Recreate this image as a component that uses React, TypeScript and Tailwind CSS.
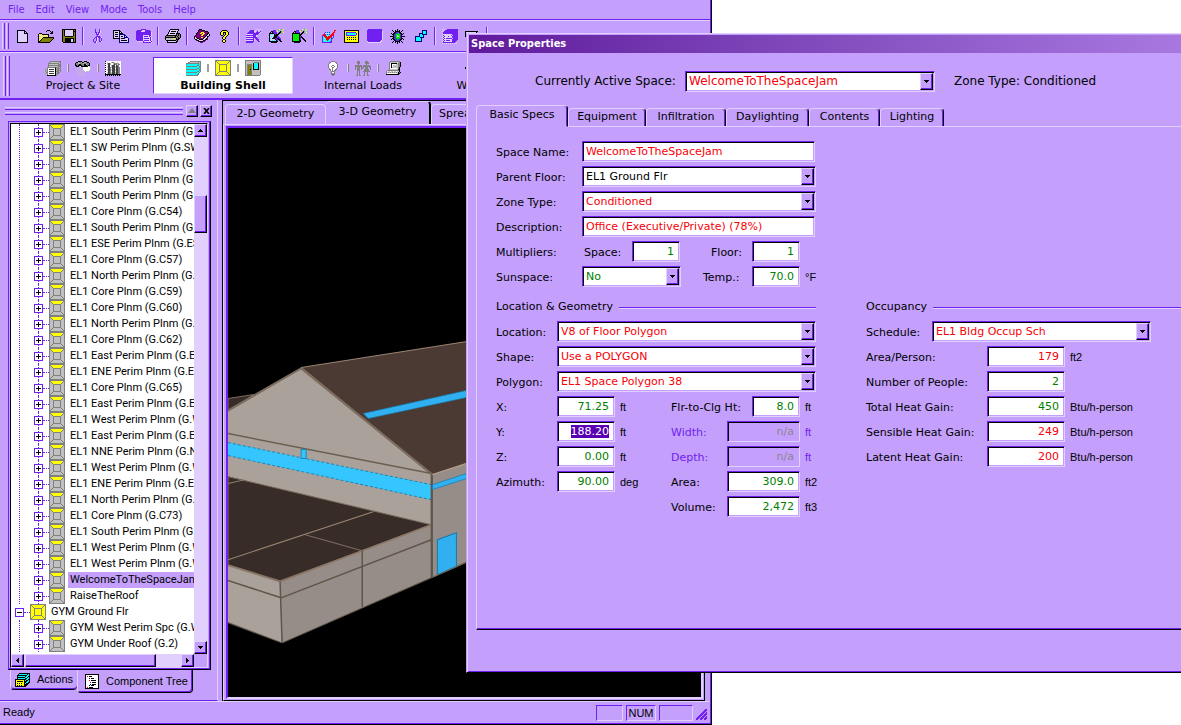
import { useEffect, useId, useRef } from "react";
import type { ReactNode } from "react";

/* ---------- pixel icons ---------- */

const PALETTE: Record<string, string> = {
  k: "#000000",
  w: "#ffffff",
  p: "#7020f0",
  l: "#e1d0fe",
  y: "#ffff00",
  o: "#808000",
  g: "#808080",
  s: "#c0c0c0",
  c: "#00ffff",
  r: "#ff0000",
  G: "#00f000",
  m: "#800080",
  b: "#000080",
  d: "#404040",
  t: "#008080",
};

function Pixels({ rows, label }: { rows: string[]; label?: string }) {
  const width = Math.max(...rows.map((r) => r.length));
  const rects: ReactNode[] = [];
  rows.forEach((row, y) => {
    let x = 0;
    while (x < row.length) {
      const ch = row[x];
      let end = x + 1;
      while (end < row.length && row[end] === ch) end++;
      if (PALETTE[ch]) {
        rects.push(<rect key={`${x}-${y}`} x={x} y={y} width={end - x} height={1} fill={PALETTE[ch]} />);
      }
      x = end;
    }
  });
  return (
    <svg width={width} height={rows.length} viewBox={`0 0 ${width} ${rows.length}`} shapeRendering="crispEdges" role={label ? "img" : undefined} aria-label={label} aria-hidden={label ? undefined : true}>
      {rects}
    </svg>
  );
}

const ICONS: Record<string, string[]> = {
  newFile: [
    "kkkkkkkk...",
    "kllllllkk..",
    "kllllllklk.",
    "kllllllkkkk",
    "klllllllllk",
    "klllllllllk",
    "klllllllllk",
    "klllllllllk",
    "klllllllllk",
    "klllllllllk",
    "klllllllllk",
    "klllllllllk",
    "kkkkkkkkkkk",
  ],
  open: [
    ".........kkk....",
    "........k...k.k.",
    ".............kk.",
    ".kkk........kkk.",
    "kylykkkkkkk.....",
    "klylylylylk.....",
    "kylylylylyk.....",
    "klylykkkkkkkkkkk",
    "kylykooooooooook",
    "klykooooooooook.",
    "kykooooooooook..",
    "kkooooooooook...",
    "kkkkkkkkkkkk....",
  ],
  save: [
    "kkkkkkkkkkkkkk",
    "kokllllllllkok",
    "kokllllllllkkk",
    "kokllllllllkok",
    "kokllllllllkok",
    "kokllllllllkok",
    "kokllllllllkok",
    "kookkkkkkkkook",
    "kooooooooooook",
    "kookkkkkkkkkok",
    "kookkkkkkllkok",
    "kookkkkkkllkok",
    "kookkkkkkllkok",
    ".kkkkkkkkkkkkk",
  ],
  cut: [
    "..p...p..",
    "..p...pl.",
    "..p...pl.",
    "..pp.ppl.",
    "...p.pl..",
    "...pppl..",
    "....pl...",
    "...pppp..",
    "..pplpppl",
    ".p.pl.p.p",
    "p..pl.p.p",
    "p..pl.p.p",
    "p.pl..ppl",
    ".ppl.....",
  ],
  copy: [
    "kkkkkkk.........",
    "klllllkk........",
    "klkkklklk.......",
    "klllllkkkk......",
    "klkkklbbbbbb....",
    "klllllbllllbb...",
    "klkkklblkklblb..",
    "klllllbllllbbbb.",
    "kkkkkkblkkkklllb",
    "......bllllllllb",
    "......blkkkkkklb",
    "......bllllllllb",
    "......bbbbbbbbbb",
  ],
  paste: [
    ".....ppppp......",
    ".ppppplllppppp..",
    "pppppllllpppppp.",
    "pppppppppppppppl",
    "pppppppppppppppl",
    "pppppppppppppppl",
    "pppppppllllllppl",
    "ppppppplpppplpl.",
    "ppppppplllllllpl",
    "ppppppplppppplpl",
    "ppppppplllllllpl",
    ".pppppplppppplpl",
    "..lllllplllllllp",
    ".......ppppppppl",
  ],
  print: [
    ".....kkkkkkkkk..",
    "....kllllllllk..",
    "....klkkkkklk...",
    "...kllllllllk...",
    "...klkkkkklkkkk.",
    "..kllllllllkgkgk",
    ".kkkkkkkkkkkgkgk",
    "kgggggggggkgkggk",
    "kkkkkkkkkkkggkgk",
    "ksssssssyyskgkk.",
    "ksssssssssskkk..",
    ".kkkkkkkkkkgk...",
    "..kllllllllkk...",
    "..kkkkkkkkkk....",
  ],
  book: [
    ".....kkk........",
    "....kmmmkkk.....",
    "....kmmmmmmkkk..",
    "...kmmmyyymmmmk.",
    "..kmmmyymyymmkk.",
    "..kmmmmmyymmmklk",
    ".kmmmmmyymmmkllk",
    "kmmmmmmmmmmklkk.",
    "klkmmmmyymkllk..",
    "kllkkmmmmkllkm..",
    ".kkllkkkkllkkm..",
    "..mkkllllkkm....",
    "....mkkkkmm.....",
    "......mmm.......",
  ],
  help: [
    "..kkkkk..",
    ".kyyyyyk.",
    "kyykkkyyk",
    "kyyk.kyyk",
    "kyyk.kyyk",
    ".kk.kyyk.",
    "...kyyk..",
    "..kyyk...",
    "..kyyk...",
    "...kk....",
    "..kyyk...",
    "..kyyk...",
    "...kk....",
  ],
  wizardMuted: [
    "..........l.l.l.",
    "....pppp.l...l..",
    "...pppppll.pl.p.",
    "..pppppp..ppppl.",
    ".ppppppppppppl..",
    "lllllllppppp....",
    "ppppppppppll....",
    "lllllllpppl.....",
    "ppppppppppp.....",
    "lllllllplppp....",
    "pppppppp..ppp...",
    "lllllllpl..ppl..",
    "pppppppp....ppl.",
    "ppppppp.........",
  ],
  wizardBox: [
    "..........y.G.y.",
    "....ppp..G...y..",
    "..kkppp.y..kG...",
    ".k.kpppp..kk..y.",
    "kkkkkppp.kk.G...",
    "kclclkpkkk......",
    "kllllkkkk.......",
    "klclckkkpp......",
    "klllkkkkppp.....",
    "kclkkkppkkpp....",
    "klllllkppkkp....",
    "kclclclkp.kk....",
    "kkkkkkkkk..kk...",
    "..kkkkkk........",
  ],
  wizardGreen: [
    "..........y.G.y.",
    "....ppp..G...y..",
    "..kkppp.y..kG...",
    ".k.kpppp..kk..y.",
    "kkkkkkkk.kk.G...",
    "kGGGGGGkkk......",
    "kGGGGGGkk.......",
    "kGGGGGGkpk......",
    "kGGGGGGkpkk.....",
    "kGGGGGGkp.kk....",
    "kGGGGGGkp..kk...",
    "kGGGGGGkk...kk..",
    "kkkkkkkkk....k..",
    "..kkkkkk........",
  ],
  check: [
    "............rr",
    "............r.",
    "...pcpcp...rr.",
    "..pllllc..rr..",
    ".rrpcpcp.rrr..",
    "prrrclc.rrrp..",
    "pcrrrcrrrr.p..",
    "pccrrrrrrpcp..",
    "pclcrrrrcpp...",
    "pcccrrrccp....",
    "pclccrcccp....",
    "pcccccccpp....",
    "pppppppppp....",
  ],
  calc: [
    "kkkkkkkkkkkkkkk",
    "kyyyyyyyyyyyyyk",
    "kyppppppppppyyk",
    "kypcccccccccpyk",
    "kypcccccccccpyk",
    "kyppppppppppyyk",
    "kyyyyyyyyyyyyyk",
    "kyykykykykykyyk",
    "kyyyyyyyyyyyyyk",
    "kyykykykykykyyk",
    "kyyyyyyyyyyyyyk",
    "kyyyyyyyyyyyyyk",
    "kkkkkkkkkkkkkkk",
  ],
  block: [
    ".pppppppppppppp.",
    "ppppppppppppppp.",
    "pppppppppppppppl",
    "pppppppppppppppl",
    "pppppppppppppppl",
    "pppppppppppppppl",
    "pppppppppppppppl",
    "pppppppppppppppl",
    "pppppppppppppppl",
    "pppppppppppppppl",
    "pppppppppppppppl",
    "ppppppppppppppl.",
    "lppppppppppppll.",
    ".lllllllllllll..",
  ],
  sun: [
    ".......k.......",
    "..k..k.k.k..k..",
    "...k.kkkkk.k...",
    "....kkpppkk....",
    ".k.kkpttGpkk.k.",
    "..kkptGGGGpkk..",
    "...kptGlGGpk...",
    "kkkkptGllGpkkkk",
    "...kptGGGGpk...",
    "..kkpttGGtpkk..",
    ".k.kkptttpkk.k.",
    "....kkpppkk....",
    "...k.kkkkk.k...",
    "..k..k.k.k..k..",
    ".......k.......",
  ],
  cubes: [
    ".......bbbbb",
    ".......bcccb",
    ".......bcccb",
    "....bbbbcccb",
    "....bccbbbbb",
    "....bcccb...",
    "bbbbbcccb...",
    "bccccbbbb...",
    "bcccccb.....",
    "bcccccb.....",
    "bcccccb.....",
    "bbbbbbb.....",
  ],
  cascade: [
    "l.l..ppppppppppp",
    ".l.ppppppppppppp",
    "l.pppppppppppppp",
    ".ppppppppppppppp",
    "lppppppppppppppp",
    ".lllllllllpppppp",
    "lplllllllplppppp",
    ".lplllplllpppppp",
    "lpllllllllpppppp",
    ".lplpppppplppppp",
    "lpllllllllpppppp",
    ".lplppppllppppp.",
    "lpllllllllpppp..",
    ".pppppppppppp...",
    "l.l.l.l.l.l.l.l.",
  ],
  windows: [
    "kkkkkkkkkkkkk...",
    "kllllllllllk....",
    "k.kkkkkkkkkkkkkk",
    "k.kllllllllllllk",
    "k.k............k",
    "kkk............k",
    "..k............k",
    "..k............k",
    "..k............k",
    "..kkkkkkkkkkkkkk",
  ],
  project: [
    ".....ggggggggggg",
    "....gsssssssssgg",
    "...gggggggggggsg",
    "...gsssssssssggg",
    "...ggggggggggggg",
    "...gsssssssssggg",
    "..ggggggggdgggsg",
    "..gwwwwwwwksgggg",
    "gsgwdddddwkgggsg",
    "sggwwwwwwwksgggg",
    "gsgwdddddwkgggsg",
    "sggwwwwwwwksggg.",
    "gsgwdddddwkggg..",
    "..gwwwwwwwksg...",
    "..kkkkkkkkkg....",
  ],
  weather: [
    "...kkkk..kkk....",
    ".kksggskkssgkk..",
    "kggssgggsgggggk.",
    "kgggkkgggkksggk.",
    "kkgkkkkggkkkgkk.",
    ".kkk.wkkkkkkkws.",
    "...s..s.wwwwwwws",
    "..s..s..wwwwwwws",
    ".s..s..swwwwwwws",
    "...s..s..wwwwws.",
    "..s..s..s.wsss..",
    "....s..s........",
    "...s..s..s......",
    ".....s..s.......",
    "....s..s........",
  ],
  chart: [
    "kwwwwwwwwwwwwwww",
    "wwswwwsggswwswww",
    "kwsddswwsgggsgww",
    "wwsddswwsdggsggw",
    "kwwddwsdddwdggww",
    "wwsddwsdddsddgww",
    "kwsddgsdddsddggw",
    "wwwddgwdddwddggw",
    "kwsddgsdddsddggw",
    "wwsddgsdddsddggw",
    "kwwddgwdddwddggw",
    "wwsddgsdddsddggw",
    "kwsddgsdddsddggw",
    "kkkkkkkkkkkkkkkk",
    "k.k.k.k.k.k.k.k.",
  ],
  tower: [
    ".....ggggggggggg",
    "...ggssssssssgsg",
    ".gggggggggggggcg",
    ".gcccccccccccgcg",
    ".cccccccccccggcg",
    ".gggggggggggccgg",
    ".cccccccccccccgg",
    ".cccccccccccggcg",
    ".gggggggggggccgg",
    ".cccccccccccccgg",
    ".cccccccccccggcg",
    ".gggggggggggccg.",
    ".ccccccccccccg..",
    ".cccccccccccgg..",
    ".gggggggggggg...",
  ],
  plan: [
    "gggggggggggggggg",
    "ggyyyyyyyyyyyygg",
    "gygyyyyyyyyyygyg",
    "gyygyyyyyyyygyyg",
    "gyyyggggggggyyyg",
    "gyyygyyyyyygyyyg",
    "gyyygyyyyyygyyyg",
    "gyyygyyyyyygyyyg",
    "gyyygyyyyyygyyyg",
    "gyyygyyyyyygyyyg",
    "gyyygyyyyyygyyyg",
    "gyyyggggggggyyyg",
    "gyygyyyyyyyygyyg",
    "gygyyyyyyyyyygyg",
    "ggyyyyyyyyyyyygg",
    "gggggggggggggggg",
  ],
  zone: [
    "gggggggggggggggg",
    "ggyyyyyyyyyyyygg",
    "gsgyyyyyyyyyygsg",
    "gssgyyyyyyyygssg",
    "gsssggggggggsssg",
    "gsssgssssssgsssg",
    "gsssgssssssgsssg",
    "gsssgssssssgsssg",
    "gsssgssssssgsssg",
    "gsssgssssssgsssg",
    "gsssgssssssgsssg",
    "gsssggggggggsssg",
    "gssgssssssssgssg",
    "gsgssssssssssgsg",
    "ggssssssssssssgg",
    "gggggggggggggggg",
  ],
  door: [
    "gggggggggggggggg",
    "gssssssssssssssg",
    "gssssssssgggggsg",
    "gssssssskccccksg",
    "gsgggggskccccksg",
    "gsgooogskccccksg",
    "gsgooogskccccksg",
    "gsgooogskccccksg",
    "gsgooogskccccksg",
    "gsgookgskkkkkksg",
    "gsgooogssssssssg",
    "gsgooogssssssssg",
    "gsgooogssssssssg",
    "gsgooogssssssssg",
    "gsgooogssssssssg",
    "ggggggggggggggg.",
  ],
  bulb: [
    "...gggg...",
    ".ggwwwwgg.",
    ".gwwwwwwg.",
    "gwwwwwwwwg",
    "gwwwggwwwg",
    "gwwgwwgwwg",
    "gwwwggwwwg",
    ".gwwgwwwg.",
    ".ggwgwwgg.",
    "..gwgwgg..",
    "...gggg...",
    "...gwwg...",
    "...gggg...",
    "...gggg...",
    "....gg....",
  ],
  people: [
    "..ggg.....ggg...",
    "..ggg.....gggg..",
    "..ggg.....gggg..",
    "...g.......g....",
    "ggggggg.ggggggg.",
    "ggggggg.gggggggg",
    "g.ggg.ggg.ggg.gg",
    "g.ggg.gg..ggg..g",
    "g.ggg.g..ggggg.g",
    "..ggg....ggggg..",
    "..g.g...ggggggg.",
    "..g.g....g..g...",
    "..g.g....g..g...",
    "..g.g....g..g...",
    ".gg.gg..gg..gg..",
  ],
  computer: [
    "....gggggggggg.",
    "...gsssssssssgk",
    "...gwkkkkkksggk",
    "...gwkwwwwssggk",
    "...gwkwsssssggk",
    "...gwkwsssssggk",
    "...gwkssssssgk.",
    "...gwwwwwwwsgk.",
    "...gsssssssskk.",
    ".ggggggggggggk.",
    "gwsswsswsswssk.",
    "gsgsgsgsgsgskgk",
    "gwwwwwwwwwwskk.",
    "kkkkkkkkkkkkk..",
  ],
  waterLoop: [
    "....kkkk........",
    "...kddddk.......",
    "..kddssddk......",
    ".kddssssddk.....",
    "kddssssssddk....",
    "kddssssssddk....",
    ".kddssssddk.....",
    "..kddssddk......",
    "...kddddk.......",
    "....kkkk........",
  ],
  actions: [
    "....kkkkkkkkkkk.",
    "...kcccccccckck.",
    "..kkkkkkkkkkcck.",
    "..kccccccckcckk.",
    "..kkkkkkkkcckck.",
    "..kccccccckkcck.",
    "kkkkkkkkkkkcckk.",
    "kyyyyyyyykckkck.",
    "kykkkkkkykkkcck.",
    "kyyyyyyyykkcckk.",
    "kykykykyykckkk..",
    "kyyyyyyyykkkk...",
    "kykykykyykkk....",
    "kkkkkkkkkkk.....",
  ],
  tree: [
    "kkkkkkkkkkkkkk",
    "kwwwwwwwwwwwwk",
    "kwrwkkkwwwwwwk",
    "kwwwwwwwwwwwwk",
    "kwwwbwkkkwwwwk",
    "kwwwwwwwwwwwwk",
    "kwwwrwkkkkkwwk",
    "kwwwwwwwwwwwwk",
    "kwwwwmwkkkkwwk",
    "kwwwwwwwwwwwwk",
    "kwwwwbwkkkkwwk",
    "kwwwbwkkkwwwwk",
    "kwwwwwwwwwwwwk",
    "kwrwkkkkwwwwwk",
    "kkkkkkkkkkkkkk",
  ],
};

/* ---------- shared looks ---------- */

const UI = "font-['DejaVu_Sans',sans-serif]";
const SYS = "font-['Liberation_Sans',sans-serif]";
const RAISED =
  "border border-t-[#e1d0fe] border-l-[#e1d0fe] border-r-black border-b-black shadow-[inset_-1px_-1px_0_#7020f0] bg-[#c4a0fc]";
const SUNKEN =
  "border border-t-[#7020f0] border-l-[#7020f0] border-r-[#e1d0fe] border-b-[#e1d0fe] shadow-[inset_1px_1px_0_#000,inset_-1px_-1px_0_#c4a0fc]";

type Tone = "red" | "green" | "black" | "gray";
const TONES: Record<Tone, string> = {
  red: "text-[#f80008]",
  green: "text-[#008000]",
  black: "text-black",
  gray: "text-[#8c8490]",
};

/* ---------- main window ---------- */

const TOOLBAR: string[][] = [
  ["newFile", "open", "save"],
  ["cut", "copy", "paste"],
  ["print"],
  ["book", "help"],
  ["wizardMuted", "wizardBox", "wizardGreen"],
  ["check", "calc", "block", "sun", "cubes"],
  ["cascade", "windows"],
];

function Grip({ height }: { height: string }) {
  return (
    <div className={`flex gap-px self-center ${height}`}>
      <span className="w-[3px] border-r border-l border-r-[#7020f0] border-l-[#e1d0fe]" />
      <span className="w-[3px] border-r border-l border-r-[#7020f0] border-l-[#e1d0fe]" />
    </div>
  );
}

function Toolbar() {
  return (
    <div className="flex h-8 items-center overflow-hidden border-t border-b border-t-[#e1d0fe] border-b-[#7020f0] pl-[2px]">
      <Grip height="h-[26px]" />
      <div className="ml-[2px] flex items-center">
        {TOOLBAR.map((group, i) => (
          <div key={i} className="flex items-center">
            {group.map((name) => (
              <button key={name} type="button" aria-label={name} className="flex h-6 w-[23px] items-center justify-center">
                <Pixels rows={ICONS[name]} />
              </button>
            ))}
            <span className="mx-[2px] h-[18px] w-[2px] border-r border-l border-r-[#e1d0fe] border-l-[#7020f0]" />
          </div>
        ))}
      </div>
    </div>
  );
}

const MODES = [
  { label: "Project & Site", icons: ["project", "weather", "chart"] },
  { label: "Building Shell", icons: ["tower", "plan", "door"], active: true },
  { label: "Internal Loads", icons: ["bulb", "people", "computer"] },
  { label: "Water-Side HVAC", icons: ["waterLoop", "waterLoop", "waterLoop"] },
];

function ModeBar() {
  return (
    <div className="flex h-12 items-center overflow-hidden border-t border-b-2 border-t-[#e1d0fe] border-b-[#7020f0] pl-[3px]">
      <Grip height="h-10" />
      <div className="ml-[3px] flex">
        {MODES.map((m) => (
          <button
            key={m.label}
            type="button"
            className={`flex h-[37px] w-[140px] shrink-0 flex-col items-center justify-between border pt-px ${
              m.active ? "border-t-[#7020f0] border-r-[#e1d0fe] border-b-[#e1d0fe] border-l-[#7020f0] bg-white font-bold" : "border-transparent"
            }`}
          >
            <span className="flex h-[18px] items-center">
              {m.icons.map((n, i) => (
                <span key={i} className="flex items-center">
                  {i > 0 && <span className={`mx-[6px] h-2 w-[2px] ${m.active ? "bg-[#a0a0a0]" : "border-r border-r-[#808080] bg-[#e1d0fe]"}`} />}
                  <span className="flex w-4 justify-center">
                    <Pixels rows={ICONS[n]} />
                  </span>
                </span>
              ))}
            </span>
            <span className={`${UI} text-[11px] leading-[15px] whitespace-nowrap`}>{m.label}</span>
          </button>
        ))}
      </div>
    </div>
  );
}

const ZONES = [
  "EL1 South Perim Plnm (G.S46)",
  "EL1 SW Perim Plnm (G.SW47)",
  "EL1 South Perim Plnm (G.S48)",
  "EL1 South Perim Plnm (G.S49)",
  "EL1 South Perim Plnm (G.S50)",
  "EL1 Core Plnm (G.C54)",
  "EL1 South Perim Plnm (G.S55)",
  "EL1 ESE Perim Plnm (G.ESE56)",
  "EL1 Core Plnm (G.C57)",
  "EL1 North Perim Plnm (G.N58)",
  "EL1 Core Plnm (G.C59)",
  "EL1 Core Plnm (G.C60)",
  "EL1 North Perim Plnm (G.N61)",
  "EL1 Core Plnm (G.C62)",
  "EL1 East Perim Plnm (G.E63)",
  "EL1 ENE Perim Plnm (G.ENE64)",
  "EL1 Core Plnm (G.C65)",
  "EL1 East Perim Plnm (G.E66)",
  "EL1 West Perim Plnm (G.W67)",
  "EL1 East Perim Plnm (G.E68)",
  "EL1 NNE Perim Plnm (G.NNE69)",
  "EL1 West Perim Plnm (G.W70)",
  "EL1 ENE Perim Plnm (G.ENE71)",
  "EL1 North Perim Plnm (G.N72)",
  "EL1 Core Plnm (G.C73)",
  "EL1 South Perim Plnm (G.S74)",
  "EL1 West Perim Plnm (G.W75)",
  "EL1 West Perim Plnm (G.W76)",
  "WelcomeToTheSpaceJam",
  "RaiseTheRoof",
];
const GYM_ZONES = ["GYM West Perim Spc (G.W1)", "GYM Under Roof (G.2)"];

function Expander({ open }: { open?: boolean }) {
  return (
    <svg width="9" height="9" viewBox="0 0 9 9" shapeRendering="crispEdges" className="shrink-0" aria-hidden="true">
      <rect width="9" height="9" fill="#7020f0" />
      <rect x="1" y="1" width="7" height="7" fill="#fff" />
      <rect x="2" y="4" width="5" height="1" fill="#000" />
      {!open && <rect x="4" y="2" width="1" height="5" fill="#000" />}
    </svg>
  );
}

function ZoneRow({ name }: { name: string }) {
  const selected = name === "WelcomeToTheSpaceJam";
  return (
    <li className="flex h-4 items-center">
      <span className="flex h-4 w-[15px] shrink-0 flex-col items-center">
        <span className="w-px grow border-l border-dotted border-[#7020f0]" />
        <Expander />
        <span className="w-px grow border-l border-dotted border-[#7020f0]" />
      </span>
      <span className="-ml-[3px] w-[6px] shrink-0 border-t border-dotted border-[#7020f0]" />
      <span className="w-4 shrink-0">
        <Pixels rows={ICONS.zone} />
      </span>
      <span className={`ml-[3px] h-4 pl-[2px] leading-4 whitespace-nowrap ${selected ? "grow bg-[#c4a0fc]" : ""}`}>{name}</span>
    </li>
  );
}

function Arrow({ dir }: { dir: "up" | "down" | "left" | "right" }) {
  const rows = {
    up: ["..k..", ".kkk.", "kkkkk"],
    down: ["kkkkk", ".kkk.", "..k.."],
    left: ["..k", ".kk", "kkk", ".kk", "..k"],
    right: ["k..", "kk.", "kkk", "kk.", "k.."],
  };
  return <Pixels rows={rows[dir]} />;
}

function ScrollButton({ dir }: { dir: "up" | "down" | "left" | "right" }) {
  return (
    <button type="button" aria-label={`Scroll ${dir}`} className={`flex h-[13px] w-[13px] shrink-0 items-center justify-center ${RAISED}`}>
      <Arrow dir={dir} />
    </button>
  );
}

function Sidebar() {
  return (
    <aside className={`flex w-[218px] shrink-0 flex-col border-r border-b border-r-[#e1d0fe] border-b-[#7020f0] text-[11px] ${SYS}`}>
      <div className="flex h-[21px] items-center pl-[5px]">
        <div className="flex w-[178px] flex-col gap-[2px]">
          <span className="h-[3px] border-t border-b border-t-[#e1d0fe] border-b-[#7020f0]" />
          <span className="h-[3px] border-t border-b border-t-[#e1d0fe] border-b-[#7020f0]" />
        </div>
        <button type="button" aria-label="Collapse" className={`ml-[3px] flex h-3 w-3 items-center justify-center ${RAISED}`}>
          <svg width="8" height="5" aria-hidden="true">
            <path d="M0 5h8L4 0z" fill="#808080" />
          </svg>
        </button>
        <button type="button" aria-label="Close" className={`ml-[2px] flex h-3 w-3 items-center justify-center ${RAISED}`}>
          <svg width="7" height="6" aria-hidden="true">
            <path d="M1 0l5 6M6 0L1 6" stroke="#000" strokeWidth="1.6" />
          </svg>
        </button>
      </div>

      <div className="mr-[6px] ml-2 flex min-h-0 grow flex-col border border-t-[#7020f0] border-r-black border-b-black border-l-[#7020f0] p-px pr-[2px] shadow-[inset_-1px_-1px_0_#7020f0]">
        <div className="flex min-h-0 grow flex-col border border-t-black border-r-[#e1d0fe] border-b-[#e1d0fe] border-l-black bg-white">
          <div className="flex h-[530px] overflow-hidden">
            <div className="min-w-0 grow overflow-hidden pl-[7px] font-['Roboto',sans-serif]">
              <ul className="ml-px border-l border-dotted border-[#7020f0] pl-[11px]">
                {ZONES.map((z, i) => (
                  <ZoneRow key={i} name={z} />
                ))}
              </ul>
              <div className="-ml-[3px] flex h-4 items-center">
                <Expander open />
                <span className="w-[6px] shrink-0 border-t border-dotted border-[#7020f0]" />
                <span className="w-4 shrink-0">
                  <Pixels rows={ICONS.plan} />
                </span>
                <span className="pl-[5px] leading-4 whitespace-nowrap">GYM Ground Flr</span>
              </div>
              <ul className="ml-px border-l border-dotted border-[#7020f0] pl-[11px]">
                {GYM_ZONES.map((z) => (
                  <ZoneRow key={z} name={z} />
                ))}
              </ul>
            </div>
            <div className="flex w-[13px] shrink-0 flex-col bg-[#e1d0fe]">
              <ScrollButton dir="up" />
              <div className="h-[58px]" />
              <div className={`h-[38px] ${RAISED}`} />
              <div className="grow" />
              <ScrollButton dir="down" />
            </div>
          </div>
          <div className="flex h-[13px] bg-[#c4a0fc]">
            <ScrollButton dir="left" />
            <div className="flex grow bg-[#e1d0fe]">
              <div className={`ml-px w-[131px] ${RAISED}`} />
            </div>
            <ScrollButton dir="right" />
            <div className="w-[13px]" />
          </div>
        </div>
      </div>

      <div className="flex h-[30px] items-start pl-[10px]">
        <button type="button" className="flex h-5 w-[67px] items-center gap-[6px] rounded-b-sm border-b border-l border-b-black border-l-[#e1d0fe] pl-[4px] shadow-[inset_0_-1px_0_#7020f0]">
          <Pixels rows={ICONS.actions} />
          Actions
        </button>
        <button type="button" className="flex h-[23px] w-[116px] items-center gap-[7px] rounded-b-sm border-r border-b border-l border-r-black border-b-black border-l-[#e1d0fe] pl-[7px] whitespace-nowrap shadow-[inset_-1px_-1px_0_#7020f0]">
          <Pixels rows={ICONS.tree} />
          Component Tree
        </button>
      </div>
    </aside>
  );
}

function Building() {
  return (
    <svg className="block h-full w-full bg-black" viewBox="228 128 473 568" preserveAspectRatio="xMinYMin slice" role="img" aria-label="3-D building model">
      <g strokeLinejoin="round">
        <path d="M228 398L254 394L228 411z" fill="#382c28" stroke="#7c6c5e" />
        <path d="M301 367L500 336V452L432 474z" fill="#4b3a34" stroke="#9a8470" />
        <path d="M228 411L301 368L431 474V525L228 476z" fill="#aaa19b" />
        <path d="M226 411L301 368L432 474" fill="none" stroke="#7c6c5e" strokeWidth="2" />
        <path d="M228 433L431 473" stroke="#6a6050" fill="none" strokeWidth="1.5" />
        <path d="M228 442L431 484V499L228 455z" fill="#36c6ff" />
        <path d="M228 442L431 484M228 455L431 499" stroke="#1c86b8" strokeDasharray="3 2" fill="none" />
        <path d="M301 449h5v9h-5z" fill="#36c6ff" stroke="#1c86b8" />
        <path d="M363 413L466 390L500 383V389L466 397L368 418z" fill="#30b0f0" stroke="#1878a8" strokeWidth="0.6" />
        <path d="M432 474L500 452V546L466 562L432 577z" fill="#978d88" />
        <path d="M432 474L500 452" stroke="#b09a88" strokeWidth="1.5" />
        <path d="M432 484L500 462V467L432 489z" fill="#30b0f0" stroke="#1878a8" strokeWidth="0.7" />
        <path d="M437 539L456 532V566L437 574z" fill="#30b0f0" stroke="#1878a8" />
        <path d="M431 577L500 546" stroke="#6a6050" />
        <path d="M228 476L431 524L362 550L280 580L228 564z" fill="#382c28" stroke="#7c6c5e" />
        <path d="M228 559L373 511M228 483L245 479" stroke="#9a8470" fill="none" />
        <path d="M305 534L362 550" stroke="#7c6c5e" fill="none" />
        <path d="M228 564L280 581L282 642L228 622z" fill="#aaa19b" />
        <path d="M280 581L362 550L431 524V577L282 642z" fill="#978d88" />
        <path d="M226 564L280 581L362 550L431 524" stroke="#8c7868" fill="none" strokeWidth="1.5" />
        <path d="M226 579L281 597L431 539M362 550V606M280 581L282 642M431 474V577" stroke="#5e5648" fill="none" strokeWidth="1.5" />
        <path d="M226 621L282 642L431 577" stroke="#5e5648" fill="none" />
      </g>
    </svg>
  );
}

function Workspace() {
  return (
    <section className={`flex min-w-0 grow flex-col border-t border-l border-black bg-[#c4a0fc] pr-[5px] text-[11px] ${UI}`}>
      <div className="flex h-[23px] items-end pl-[2px]">
        <button type="button" className="h-5 w-[101px] rounded-t-sm border-t border-r border-l border-[#e1d0fe]">2-D Geometry</button>
        <button type="button" className="h-[23px] w-[105px] rounded-t-sm border-t border-r-2 border-t-[#e1d0fe] border-r-black pb-[2px]">3-D Geometry</button>
        <button type="button" className="h-5 w-[100px] rounded-t-sm border-t border-l border-[#e1d0fe] pl-[7px] text-left">Spreadsheet</button>
      </div>
      <div className="flex min-h-0 grow border border-t-[#e1d0fe] border-r-black border-b-black border-l-[#e1d0fe] py-px pr-px pl-[2px]">
        <div className="min-w-0 grow border-2 border-t-[#7020f0] border-r-[#e1d0fe] border-b-[#e1d0fe] border-l-[#7020f0]">
          <Building />
        </div>
      </div>
    </section>
  );
}

function StatusBar() {
  const pane = "h-4 border border-t-[#7020f0] border-l-[#7020f0] border-r-[#e1d0fe] border-b-[#e1d0fe]";
  return (
    <footer className={`flex h-[22px] shrink-0 items-center gap-[3px] border-t border-[#e1d0fe] px-[3px] text-[11px] ${SYS}`}>
      <span className="grow">Ready</span>
      <span className={`w-[27px] ${pane}`} />
      <span className={`w-[30px] text-center leading-[14px] ${pane}`}>NUM</span>
      <span className={`w-[34px] ${pane}`} />
      <svg width="11" height="11" className="mb-[3px] self-end" shapeRendering="crispEdges" aria-hidden="true">
        <path d="M0 11L11 0M4 11L11 4M8 11L11 8" stroke="#7020f0" strokeWidth="1.5" />
      </svg>
    </footer>
  );
}

function MainWindow() {
  return (
    <div className="flex h-screen min-h-[725px] w-[712px] flex-col border-r border-b border-black bg-[#c4a0fc] text-black">
      <div className="flex min-h-0 grow flex-col border-r border-b border-[#7020f0]">
        <nav className="flex h-5 shrink-0 items-center gap-[11px] border-b border-[#7020f0] pt-[2px] pl-[8px] font-['DejaVu_Sans_Condensed','Open_Sans',sans-serif] text-[11px] text-[#7020f0]">
          {["File", "Edit", "View", "Mode", "Tools", "Help"].map((m) => (
            <button key={m} type="button">
              {m}
            </button>
          ))}
        </nav>
        <Toolbar />
        <ModeBar />
        <div className="flex min-h-0 grow gap-[4px]">
          <Sidebar />
          <Workspace />
        </div>
        <StatusBar />
      </div>
    </div>
  );
}

/* ---------- dialog ---------- */

function Combo({ id, value, tone, className }: { id: string; value: string; tone: Tone; className: string }) {
  return (
    <div className={`relative h-[21px] ${className}`}>
      <select id={id} defaultValue={value} className={`block h-full w-full appearance-none bg-white pl-[3px] leading-[18px] outline-none ${SUNKEN} ${TONES[tone]}`}>
        <option>{value}</option>
      </select>
      <span className={`pointer-events-none absolute top-[2px] right-[2px] flex h-[17px] w-[13px] items-center justify-center ${RAISED}`}>
        <Pixels rows={["kkkkk", ".kkk.", "..k.."]} />
      </span>
    </div>
  );
}

function TextField({
  id,
  value,
  tone = "green",
  className,
  align = "right",
  disabled,
  highlighted,
}: {
  id: string;
  value: string;
  tone?: Tone;
  className: string;
  align?: "left" | "right";
  disabled?: boolean;
  highlighted?: boolean;
}) {
  const ref = useRef<HTMLInputElement>(null);
  useEffect(() => {
    if (highlighted && ref.current) {
      ref.current.focus();
      ref.current.select();
    }
  }, [highlighted]);
  return (
    <input
      ref={ref}
      id={id}
      defaultValue={value}
      disabled={disabled}
      className={`block h-[21px] shrink-0 leading-[13px] outline-none selection:bg-[#5a00b4] selection:text-white ${SUNKEN} ${TONES[tone]} ${disabled ? "bg-[#c4a0fc]" : "bg-white"} ${
        align === "right" ? "pr-[5px] text-right" : "pl-[3px]"
      } ${className}`}
    />
  );
}

function Label({ id, width, children, muted }: { id: string; width: string; children: ReactNode; muted?: boolean }) {
  return (
    <label htmlFor={id} className={`shrink-0 whitespace-nowrap ${width} ${muted ? "text-[#7020f0]" : ""}`}>
      {children}
    </label>
  );
}

function Row({ children }: { children: ReactNode }) {
  return <div className="flex h-[25px] items-start leading-[23px]">{children}</div>;
}

function Unit({ children, muted }: { children: ReactNode; muted?: boolean }) {
  return <span className={`ml-[5px] ${SYS} ${muted ? "text-[#7020f0]" : ""}`}>{children}</span>;
}

function SectionTitle({ children }: { children: ReactNode }) {
  return (
    <h2 className="flex h-[30px] items-center gap-[6px] pt-[3px] whitespace-nowrap">
      {children}
      <span className="h-[2px] grow border-t border-b border-t-[#7020f0] border-b-[#e1d0fe]" />
    </h2>
  );
}

const LEFT_VALUES = [
  { label: "X:", value: "71.25", unit: "ft" },
  { label: "Y:", value: "188.20", unit: "ft", highlighted: true },
  { label: "Z:", value: "0.00", unit: "ft" },
  { label: "Azimuth:", value: "90.00", unit: "deg" },
];
const RIGHT_VALUES = [
  { label: "Flr-to-Clg Ht:", value: "8.0", unit: "ft", narrow: true },
  { label: "Width:", value: "n/a", unit: "ft", disabled: true },
  { label: "Depth:", value: "n/a", unit: "ft", disabled: true },
  { label: "Area:", value: "309.0", unit: "ft2" },
  { label: "Volume:", value: "2,472", unit: "ft3" },
];
const OCCUPANCY: { label: string; value: string; unit: string; tone: Tone }[] = [
  { label: "Area/Person:", value: "179", unit: "ft2", tone: "red" },
  { label: "Number of People:", value: "2", unit: "", tone: "green" },
  { label: "Total Heat Gain:", value: "450", unit: "Btu/h-person", tone: "green" },
  { label: "Sensible Heat Gain:", value: "249", unit: "Btu/h-person", tone: "red" },
  { label: "Latent Heat Gain:", value: "200", unit: "Btu/h-person", tone: "red" },
];
const TABS = [
  { label: "Equipment", width: "w-[78px]" },
  { label: "Infiltration", width: "w-[80px]" },
  { label: "Daylighting", width: "w-[83px]" },
  { label: "Contents", width: "w-[71px]" },
  { label: "Lighting", width: "w-[64px]" },
];

function SpaceDialog() {
  const uid = useId();
  const id = (name: string) => `${uid}-${name}`;
  return (
    <div
      role="dialog"
      aria-label="Space Properties"
      className={`absolute top-[33px] right-0 left-[466px] flex h-[640px] flex-col overflow-hidden border-b border-l border-b-black border-l-[#c4a0fc] bg-[#c4a0fc] text-[11px] text-black shadow-[inset_1px_1px_0_#e1d0fe,inset_0_-1px_0_#7020f0] ${UI}`}
    >
      <div className="mt-[2px] ml-[2px] flex h-[18px] shrink-0 items-center bg-linear-to-r from-[#60189c] to-[#a878e0] pt-px pl-[2px] font-['DejaVu_Sans_Condensed','Open_Sans',sans-serif] text-[11px] font-bold text-white">
        Space Properties
      </div>

      <div className="mt-[17px] flex h-[22px] shrink-0 items-center pl-[68px] text-[12px]">
        <Label id={id("active")} width="w-[150px]">Currently Active Space:</Label>
        <Combo id={id("active")} value="WelcomeToTheSpaceJam" tone="red" className="w-[250px]" />
        <span className="ml-[19px]">Zone Type: Conditioned</span>
      </div>

      <div className="mt-[13px] flex h-[21px] shrink-0 items-end pl-[9px]">
        <button type="button" className="relative z-10 -mb-px h-[22px] w-[92px] rounded-t-sm border border-t-[#e1d0fe] border-r-black border-b-[#c4a0fc] border-l-[#e1d0fe] bg-[#c4a0fc] pb-[2px] shadow-[inset_-1px_0_0_#7020f0]">
          Basic Specs
        </button>
        {TABS.map((t) => (
          <button key={t.label} type="button" className={`h-[18px] rounded-t-sm border-t border-r border-l border-t-[#e1d0fe] border-r-black border-l-[#e1d0fe] shadow-[inset_-1px_0_0_#7020f0] ${t.width}`}>
            {t.label}
          </button>
        ))}
      </div>

      <div className="mb-[42px] ml-[9px] grow border-t border-b border-l border-t-[#e1d0fe] border-b-black border-l-[#e1d0fe] pt-[14px] pl-[19px] shadow-[inset_0_-1px_0_#7020f0]">
        <div className="w-[320px]">
          <Row>
            <Label id={id("name")} width="w-[86px]">Space Name:</Label>
            <TextField id={id("name")} value="WelcomeToTheSpaceJam" tone="red" align="left" className="w-[233px]" />
          </Row>
          <Row>
            <Label id={id("floor")} width="w-[86px]">Parent Floor:</Label>
            <Combo id={id("floor")} value="EL1 Ground Flr" tone="black" className="grow" />
          </Row>
          <Row>
            <Label id={id("zone")} width="w-[86px]">Zone Type:</Label>
            <Combo id={id("zone")} value="Conditioned" tone="red" className="grow" />
          </Row>
          <Row>
            <Label id={id("desc")} width="w-[86px]">Description:</Label>
            <TextField id={id("desc")} value="Office (Executive/Private) (78%)" tone="red" align="left" className="w-[233px]" />
          </Row>
          <Row>
            <span className="w-[88px]">Multipliers:</span>
            <Label id={id("mspace")} width="w-[48px]">Space:</Label>
            <TextField id={id("mspace")} value="1" className="w-[48px]" />
            <Label id={id("mfloor")} width="ml-[31px] w-[41px]">Floor:</Label>
            <TextField id={id("mfloor")} value="1" className="w-[48px]" />
          </Row>
          <Row>
            <Label id={id("sun")} width="w-[86px]">Sunspace:</Label>
            <Combo id={id("sun")} value="No" tone="green" className="w-[99px] shrink-0" />
            <Label id={id("temp")} width="ml-[22px] w-[49px]">Temp.:</Label>
            <TextField id={id("temp")} value="70.0" className="w-[48px]" />
            <Unit>°F</Unit>
          </Row>
        </div>

        <div className="flex gap-[50px]">
          <section className="w-[320px] shrink-0">
            <SectionTitle>Location &amp; Geometry</SectionTitle>
            <Row>
              <Label id={id("loc")} width="w-[61px]">Location:</Label>
              <Combo id={id("loc")} value="V8 of Floor Polygon" tone="red" className="grow" />
            </Row>
            <Row>
              <Label id={id("shape")} width="w-[61px]">Shape:</Label>
              <Combo id={id("shape")} value="Use a POLYGON" tone="red" className="grow" />
            </Row>
            <Row>
              <Label id={id("poly")} width="w-[61px]">Polygon:</Label>
              <Combo id={id("poly")} value="EL1 Space Polygon 38" tone="red" className="grow" />
            </Row>
            <div className="flex">
              <div className="w-[175px] shrink-0">
                {LEFT_VALUES.map((f) => (
                  <Row key={f.label}>
                    <Label id={id(f.label)} width="w-[61px]">{f.label}</Label>
                    <TextField id={id(f.label)} value={f.value} className="w-[58px]" highlighted={f.highlighted} />
                    <Unit>{f.unit}</Unit>
                  </Row>
                ))}
              </div>
              <div className="shrink-0">
                {RIGHT_VALUES.map((f) => (
                  <Row key={f.label}>
                    <Label id={id(f.label)} width={f.narrow ? "w-[81px]" : "w-[56px]"} muted={f.disabled}>{f.label}</Label>
                    <TextField id={id(f.label)} value={f.value} tone={f.disabled ? "gray" : "green"} disabled={f.disabled} className={f.narrow ? "w-[48px]" : "w-[73px]"} />
                    <Unit muted={f.disabled}>{f.unit}</Unit>
                  </Row>
                ))}
              </div>
            </div>
          </section>

          <section className="min-w-0 grow">
            <SectionTitle>Occupancy</SectionTitle>
            <Row>
              <Label id={id("sch")} width="w-[66px]">Schedule:</Label>
              <Combo id={id("sch")} value="EL1 Bldg Occup Sch" tone="red" className="w-[219px]" />
            </Row>
            {OCCUPANCY.map((f) => (
              <Row key={f.label}>
                <Label id={id(f.label)} width="w-[121px]">{f.label}</Label>
                <TextField id={id(f.label)} value={f.value} tone={f.tone} className="w-[78px]" />
                <Unit>{f.unit}</Unit>
              </Row>
            ))}
          </section>
        </div>
      </div>
    </div>
  );
}

export default function App() {
  return (
    <main className="relative min-h-screen overflow-hidden bg-white">
      <MainWindow />
      <SpaceDialog />
    </main>
  );
}
